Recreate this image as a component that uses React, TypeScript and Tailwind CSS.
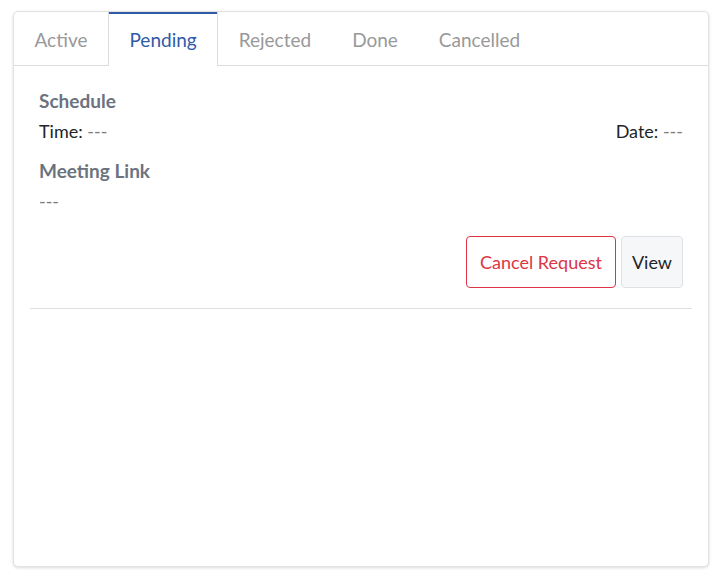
import React from "react";

const tabs = ["Active", "Pending", "Rejected", "Done", "Cancelled"];

const App: React.FC = () => {
  const current = "Pending";

  return (
    <div className="w-[720px] h-[578px] bg-white pt-[11px] pl-[13px] font-['Lato',sans-serif]">
      <div className="w-[696px] h-[556px] bg-white border border-[#e2e2e2] rounded-[5px] shadow-[0_1px_3px_rgba(0,0,0,0.15)] flex flex-col overflow-hidden">
        {/* Tabs */}
        <div className="flex h-[54px] border-b border-[#dcdcdc] shrink-0">
          {tabs.map((t) =>
            t === current ? (
              <div
                key={t}
                className="h-[55px] -mt-px px-[20.5px] flex items-center border-t-[3px] border-[#2f5aa6] border-x border-x-[#dcdcdc] bg-white text-[#2f5ba8] text-[19px] rounded-t-[3px] z-10"
              >
                {t}
              </div>
            ) : (
              <div
                key={t}
                className="h-[54px] px-[20.5px] flex items-center border-t-[3px] border-transparent text-[#999999] text-[19px]"
              >
                {t}
              </div>
            )
          )}
        </div>

        {/* Body */}
        <div className="px-4 pt-[23px] -mt-px">
          <div className="px-[9px] pb-5">
            <div className="text-[19px] leading-[26px] font-bold text-[#6c737f]">
              Schedule
            </div>
            <div className="flex justify-between mt-1 text-[18px] leading-[26px] text-[#212529]">
              <span>
                Time: <span className="text-[#7a7a7a]">---</span>
              </span>
              <span>
                Date: <span className="text-[#7a7a7a]">---</span>
              </span>
            </div>
            <div className="mt-[14px] text-[19px] leading-[26px] font-bold text-[#6c737f]">
              Meeting Link
            </div>
            <div className="mt-1 text-[18px] leading-[26px] text-[#7a7a7a]">---</div>
            <div className="flex justify-end gap-[5px] mt-[22px]">
              <button className="h-[52px] px-[13px] border border-[#dc3545] rounded-[4px] bg-white text-[#dc3545] text-[18px]">
                Cancel Request
              </button>
              <button className="h-[52px] px-[10px] border border-[#dee2e6] rounded-[4px] bg-[#f6f7f9] text-[#212529] text-[18px]">
                View
              </button>
            </div>
          </div>
          <div className="border-t border-[#e0e0e0]" />
        </div>
      </div>
    </div>
  );
};

export default App;
